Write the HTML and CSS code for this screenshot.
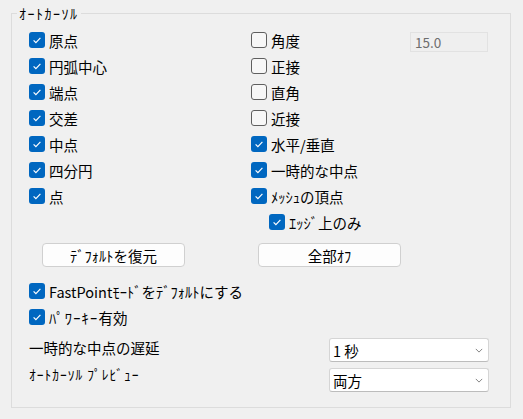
FILE: index.html
```html
<!DOCTYPE html>
<html lang="ja">
<head>
    <meta charset="UTF-8">
    <title>ｵｰﾄｶｰｿﾙ</title>
    <link rel="stylesheet" href="styles.css">
</head>
<body>
    <fieldset class="group">
        <legend>ｵｰﾄｶｰｿﾙ</legend>

        <!-- スナップ種類 -->
        <div class="snaps">
            <div class="col">
                <div class="check on"><span class="box"><svg viewBox="0 0 16 16"><path d="M4.6 8.3 6.9 10.6 11.4 5.9"/></svg></span><span>原点</span></div>
                <div class="check on"><span class="box"><svg viewBox="0 0 16 16"><path d="M4.6 8.3 6.9 10.6 11.4 5.9"/></svg></span><span>円弧中心</span></div>
                <div class="check on"><span class="box"><svg viewBox="0 0 16 16"><path d="M4.6 8.3 6.9 10.6 11.4 5.9"/></svg></span><span>端点</span></div>
                <div class="check on"><span class="box"><svg viewBox="0 0 16 16"><path d="M4.6 8.3 6.9 10.6 11.4 5.9"/></svg></span><span>交差</span></div>
                <div class="check on"><span class="box"><svg viewBox="0 0 16 16"><path d="M4.6 8.3 6.9 10.6 11.4 5.9"/></svg></span><span>中点</span></div>
                <div class="check on"><span class="box"><svg viewBox="0 0 16 16"><path d="M4.6 8.3 6.9 10.6 11.4 5.9"/></svg></span><span>四分円</span></div>
                <div class="check on"><span class="box"><svg viewBox="0 0 16 16"><path d="M4.6 8.3 6.9 10.6 11.4 5.9"/></svg></span><span>点</span></div>
            </div>
            <div class="col">
                <div class="check"><span class="box"></span><span>角度</span><div class="angle">15.0</div></div>
                <div class="check"><span class="box"></span><span>正接</span></div>
                <div class="check"><span class="box"></span><span>直角</span></div>
                <div class="check"><span class="box"></span><span>近接</span></div>
                <div class="check on"><span class="box"><svg viewBox="0 0 16 16"><path d="M4.6 8.3 6.9 10.6 11.4 5.9"/></svg></span><span>水平/垂直</span></div>
                <div class="check on"><span class="box"><svg viewBox="0 0 16 16"><path d="M4.6 8.3 6.9 10.6 11.4 5.9"/></svg></span><span>一時的な中点</span></div>
                <div class="check on"><span class="box"><svg viewBox="0 0 16 16"><path d="M4.6 8.3 6.9 10.6 11.4 5.9"/></svg></span><span>ﾒｯｼｭの頂点</span></div>
                <div class="check on sub"><span class="box"><svg viewBox="0 0 16 16"><path d="M4.6 8.3 6.9 10.6 11.4 5.9"/></svg></span><span>ｴｯｼﾞ上のみ</span></div>
            </div>
        </div>

        <div class="actions">
            <div class="btn restore">ﾃﾞﾌｫﾙﾄを復元</div>
            <div class="btn off">全部ｵﾌ</div>
        </div>

        <div class="options">
            <div class="check on"><span class="box"><svg viewBox="0 0 16 16"><path d="M4.6 8.3 6.9 10.6 11.4 5.9"/></svg></span><span>FastPointﾓｰﾄﾞをﾃﾞﾌｫﾙﾄにする</span></div>
            <div class="check on"><span class="box"><svg viewBox="0 0 16 16"><path d="M4.6 8.3 6.9 10.6 11.4 5.9"/></svg></span><span class="wide">ﾊﾟﾜｰｷｰ</span><span class="joined">有効</span></div>
        </div>

        <div class="settings">
            <div class="label">一時的な中点の遅延</div>
            <div class="dropdown"><span>1 秒</span><svg viewBox="0 0 10 6"><path d="M1 1 5 5 9 1"/></svg></div>
            <div class="label preview">ｵｰﾄｶｰｿﾙ ﾌﾟﾚﾋﾞｭｰ</div>
            <div class="dropdown"><span>両方</span><svg viewBox="0 0 10 6"><path d="M1 1 5 5 9 1"/></svg></div>
        </div>
    </fieldset>
</body>
</html>
```

FILE: styles.css
```css
body {
    margin: 0;
    padding: 6px 0 0 11px;
    background-color: #f0f0f0;
    color: #000;
    font-family: "Noto Sans CJK JP", "Noto Sans", sans-serif;
    font-size: 14.5px;
}
.group {
    margin: 0;
    width: 500px;
    box-sizing: border-box;
    border: 1px solid #dcdcdc;
    padding: 7px 0 15px 17px;
}
.group legend {
    margin-left: -12px;
    padding: 0 2px;
    font-size: 14px;
    line-height: 14px;
    letter-spacing: 1.5px;
}
.snaps,
.actions {
    display: grid;
    grid-template-columns: 222px 237px;
}
.check {
    display: flex;
    align-items: center;
    gap: 4px;
    height: 26px;
    white-space: nowrap;
}
.check .wide {
    letter-spacing: 1.2px;
}
.check .joined {
    margin-left: -4px;
}
.check.sub {
    padding-left: 18px;
}
.box {
    flex: none;
    width: 16px;
    height: 16px;
    box-sizing: border-box;
    border: 1px solid #5f5f5f;
    border-radius: 3px;
    background-color: #f7f7f7;
}
.check.on .box {
    border: none;
    background-color: #0067c0;
}
.box svg {
    display: block;
    width: 16px;
    height: 16px;
    fill: none;
    stroke: #fff;
    stroke-width: 1.2;
}
.angle {
    margin-left: auto;
    width: 78px;
    height: 20px;
    margin-top: 4px;
    box-sizing: border-box;
    border: 1px solid #e2e2e2;
    background-color: #efefef;
    color: #6d6d6d;
    font-size: 13.5px;
    line-height: 18px;
    padding-left: 4px;
}
.actions {
    margin-top: 8px;
}
.btn {
    width: 143px;
    height: 24px;
    box-sizing: border-box;
    border: 1px solid #d0d0d0;
    border-radius: 4px;
    background-color: #fdfdfd;
    display: flex;
    align-items: center;
    justify-content: center;
}
.btn.restore {
    margin-left: 13px;
}
.btn.off {
    margin-left: 7px;
}
.options {
    margin-top: 11px;
}
.settings {
    display: grid;
    grid-template-columns: 300px 160px;
    row-gap: 6px;
    margin-top: 8px;
}
.label {
    line-height: 20px;
}
.label.preview {
    margin-top: -4px;
    font-size: 13.5px;
    letter-spacing: 1px;
}
.dropdown {
    height: 24px;
    box-sizing: border-box;
    border: 1px solid #d5d5d5;
    border-bottom-color: #bcbcbc;
    border-radius: 3px;
    background-color: #fff;
    display: flex;
    align-items: center;
    justify-content: space-between;
    padding: 0 5px 0 3px;
}
.dropdown svg {
    width: 8px;
    height: 5px;
    fill: none;
    stroke: #666;
    stroke-width: 1;
}
```
